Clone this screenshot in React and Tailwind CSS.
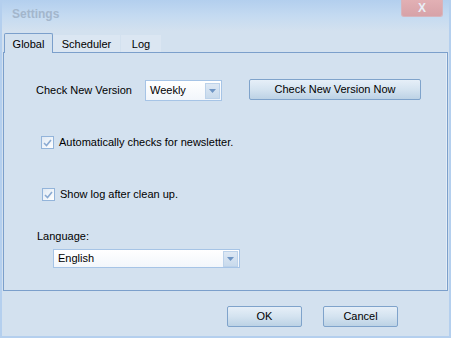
import React from 'react';

const font = { fontFamily: '"Liberation Sans", Arial, sans-serif' };

function Combo({ value, className }) {
  return (
    <div
      className={`flex items-center justify-between border border-[#a6c4e6] bg-gradient-to-b from-white to-[#f2f6fb] pl-[4px] pr-[1px] ${className}`}
    >
      <span className="text-[11px] leading-none text-black">{value}</span>
      <div className="flex h-[16px] w-[15px] items-center justify-center border border-[#bcd2ea] bg-gradient-to-b from-[#dde8f4] to-[#c8daec]">
        <svg width="7" height="4" viewBox="0 0 7 4">
          <path d="M0 0h7L3.5 4z" fill="#6f95c4" />
        </svg>
      </div>
    </div>
  );
}

function Button({ children, className }) {
  return (
    <button
      type="button"
      className={`flex items-center justify-center rounded-[2px] border border-[#7fa3cb] bg-gradient-to-b from-[#e6eff8] via-[#d4e3f0] to-[#bcd2e5] text-[11px] leading-none text-black ${className}`}
    >
      {children}
    </button>
  );
}

function Check({ label, className }) {
  return (
    <div className={`flex items-center ${className}`}>
      <div className="flex h-[13px] w-[13px] items-center justify-center border border-[#93b4da] bg-gradient-to-br from-[#dfe9f4] to-white">
        <svg width="9" height="8" viewBox="0 0 9 8">
          <path d="M1 4l2.5 2.5L8 1" fill="none" stroke="#8aaad2" strokeWidth="1.6" />
        </svg>
      </div>
      <span className="ml-[5px] text-[11px] leading-none text-black">{label}</span>
    </div>
  );
}

export default function App() {
  return (
    <div
      style={font}
      className="flex h-[338px] w-[451px] flex-col overflow-hidden border-x-2 border-b-2 border-[#b4cfee] bg-[#d3e1ef]"
    >
      {/* title bar */}
      <div className="flex h-[31px] shrink-0 items-start justify-between bg-gradient-to-b from-[#b3cfee] via-[#c4daf1] to-[#d3e1ef]">
        <span className="ml-[10px] mt-[8px] text-[12px] font-bold leading-none text-[#a3b6cc]">Settings</span>
        <div className="mr-[6px] flex h-[17px] w-[42px] items-center justify-center rounded-b-[3px] border border-t-0 border-[#d6b4bc] bg-gradient-to-b from-[#e2b0b4] to-[#d7a2a8]">
          <span className="text-[12px] font-bold leading-none text-[#e9eef6]">X</span>
        </div>
      </div>

      {/* tabs */}
      <div className="mt-[2px] flex h-[19px] shrink-0 items-end pl-[2px] text-[11px] leading-none text-black">
        <div className="relative z-10 -mb-px flex h-[20px] w-[49px] items-center justify-center rounded-t-[2px] border border-b-0 border-[#7b9fcb] bg-[#d3e1ef] pt-[1px]">
          Global
        </div>
        <div className="flex h-[17px] w-[68px] items-center justify-center border-r border-[#d3e1ef] bg-[#dbe6f2] pt-[1px]">
          Scheduler
        </div>
        <div className="flex h-[17px] w-[40px] items-center justify-center bg-[#dbe6f2] pt-[1px]">Log</div>
      </div>

      {/* panel */}
      <div className="mx-[1px] flex h-[239px] shrink-0 flex-col border border-[#7b9fcb] shadow-[inset_-1px_0_0_#e4edf7]">
        <div className="mt-[27px] flex items-center">
          <span className="ml-[32px] w-[109px] text-[11px] leading-none text-black">Check New Version</span>
          <Combo value="Weekly" className="h-[21px] w-[77px]" />
          <Button className="ml-[27px] h-[21px] w-[172px] -translate-y-[1px]">Check New Version Now</Button>
        </div>
        <Check label="Automatically checks for newsletter." className="ml-[37px] mt-[35px]" />
        <Check label="Show log after clean up." className="ml-[38px] mt-[39px]" />
        <span className="ml-[33px] mt-[30px] text-[11px] leading-none text-black">Language:</span>
        <Combo value="English" className="ml-[49px] mt-[7px] h-[19px] w-[187px]" />
      </div>

      {/* footer */}
      <div className="mt-[15px] flex">
        <Button className="ml-[225px] h-[21px] w-[75px]">OK</Button>
        <Button className="ml-[21px] h-[21px] w-[75px]">Cancel</Button>
      </div>
    </div>
  );
}
